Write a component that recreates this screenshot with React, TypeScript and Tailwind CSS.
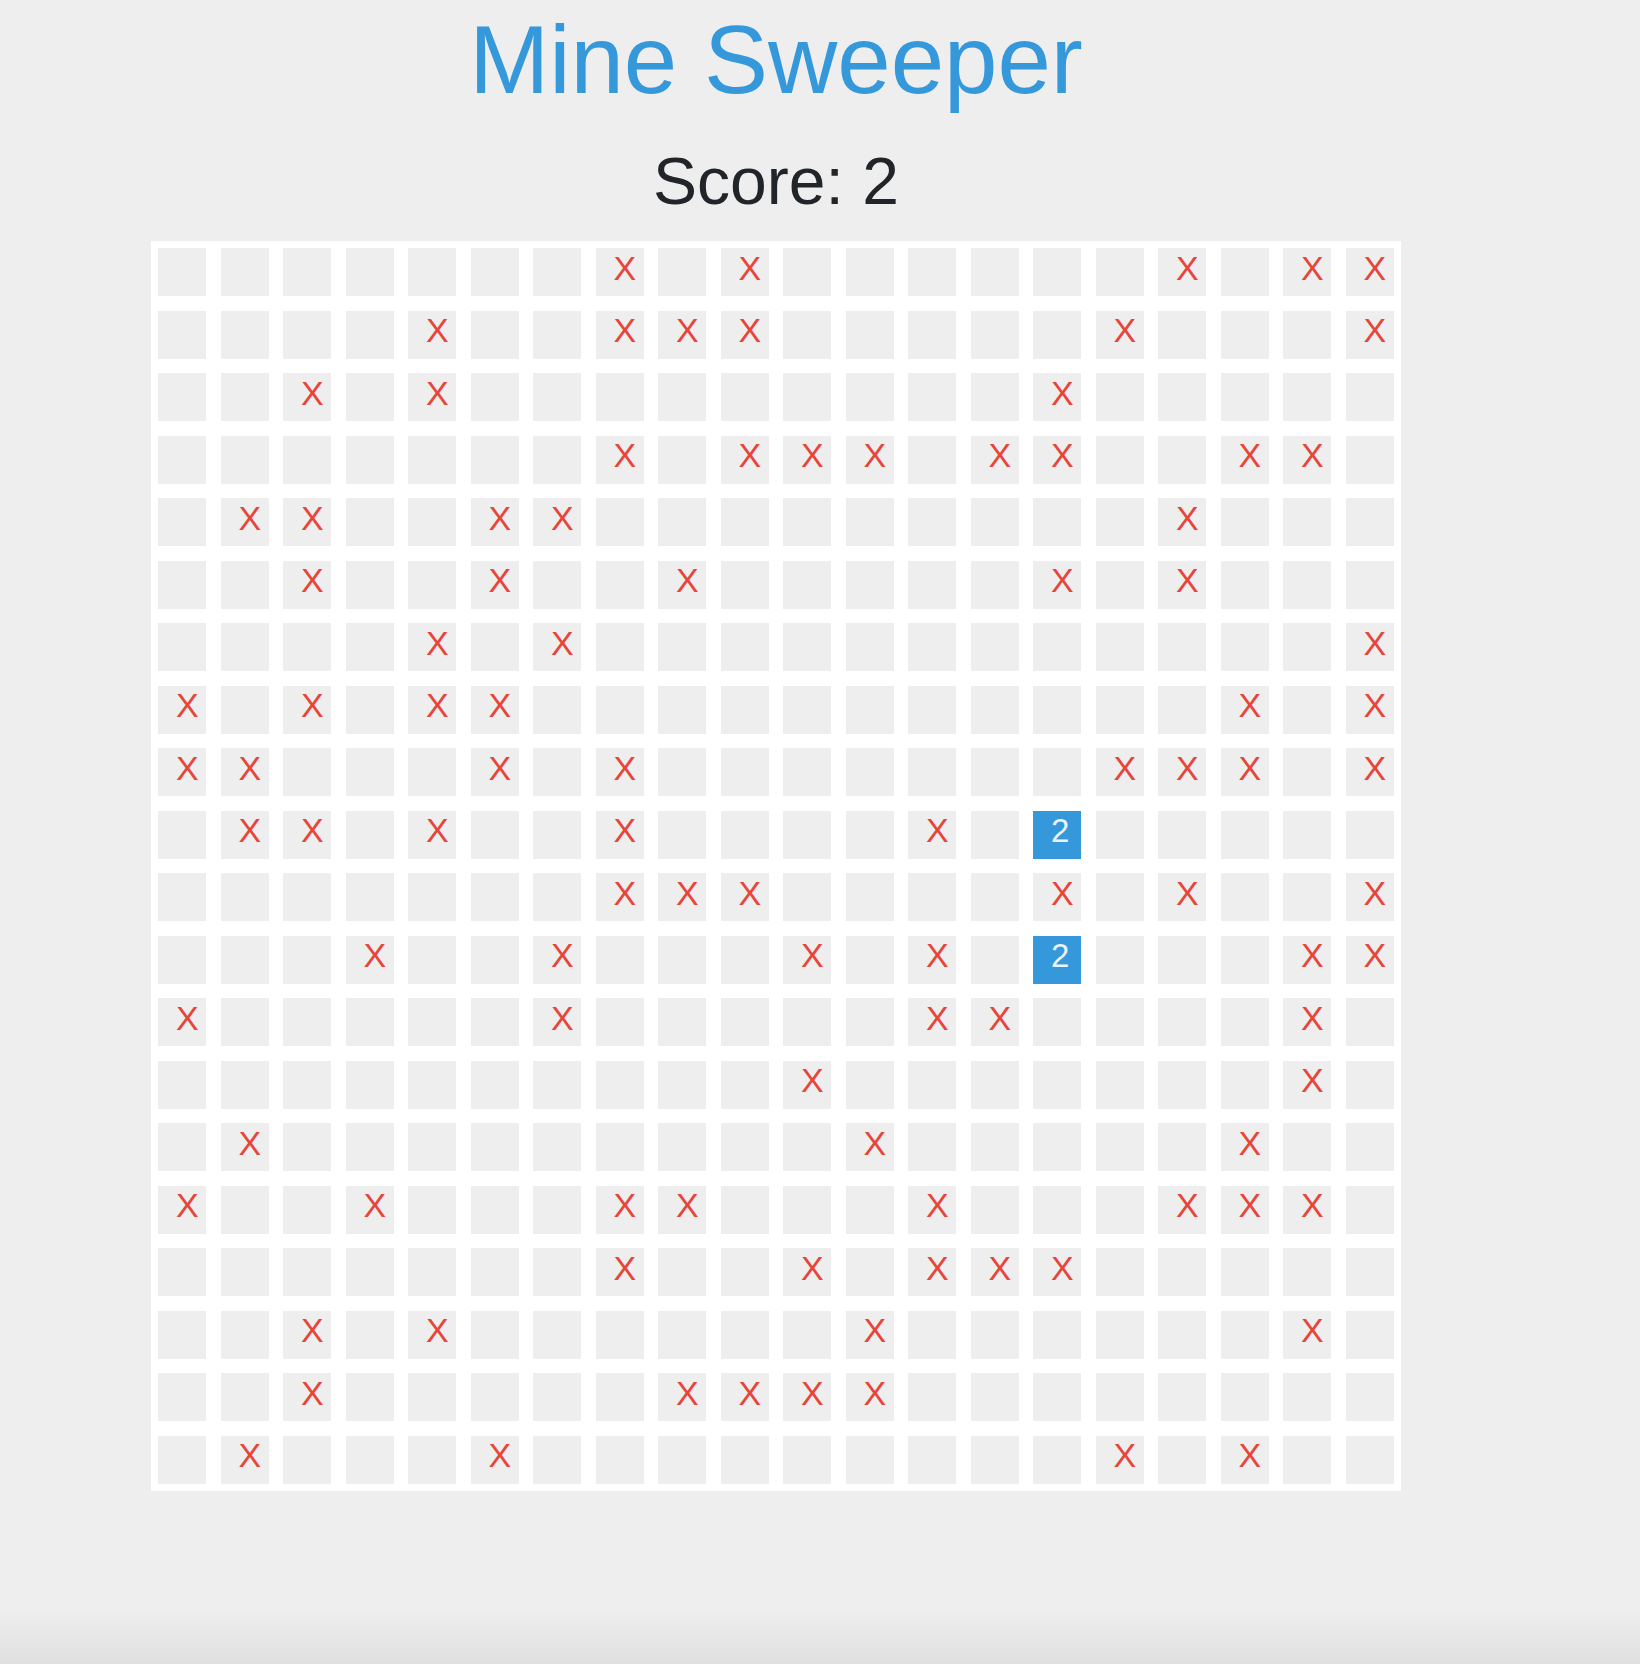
const BOARD = [
  ".......x.x......x.xx",
  "....x..xxx.....x...x",
  "..x.x.........x.....",
  ".......x.xxx.xx..xx.",
  ".xx..xx.........x...",
  "..x..x..x.....x.x...",
  "....x.x............x",
  "x.x.xx...........x.x",
  "xx...x.x.......xxx.x",
  ".xx.x..x....x.2.....",
  ".......xxx....x.x..x",
  "...x..x...x.x.2...xx",
  "x.....x.....xx....x.",
  "..........x.......x.",
  ".x.........x.....x..",
  "x..x...xx...x...xxx.",
  ".......x..x.xxx.....",
  "..x.x......x......x.",
  "..x.....xxxx........",
  ".x...x.........x.x..",
];

const Cell = ({ v }: { v: string }) => {
  if (v === "2") {
    return (
      <div className="flex h-12 w-12 items-center justify-center bg-[#3498db] pb-[8px] pl-[6px] text-[33px] leading-none text-[#eaf3fb]">
        2
      </div>
    );
  }
  return (
    <div className="flex h-12 w-12 items-center justify-center bg-[#eeeeee] pb-[9px] pl-[10px] text-[34px] leading-none text-[#e8453a]">
      {v === "x" ? "X" : ""}
    </div>
  );
};

export default function App() {
  return (
    <div className="h-[1664px] bg-[linear-gradient(to_bottom,#eeeeee_1610px,#e0e0e0)] font-['Liberation_Sans',Arial,sans-serif]">
      <div className="ml-[151px] w-[1250px] pt-[4px] text-center">
        <h1 className="text-[96px] leading-[111px] font-normal text-[#3498db]">Mine Sweeper</h1>
        <h2 className="mt-[28px] text-[66px] leading-[77px] font-normal text-[#212529]">Score: 2</h2>

        <div className="mt-[21px] grid grid-cols-[repeat(20,48px)] gap-[14.5px] bg-white p-[7.25px]">
          {BOARD.map((row, r) =>
            row.split("").map((v, c) => <Cell key={`${r}-${c}`} v={v} />)
          )}
        </div>
      </div>
    </div>
  );
}
